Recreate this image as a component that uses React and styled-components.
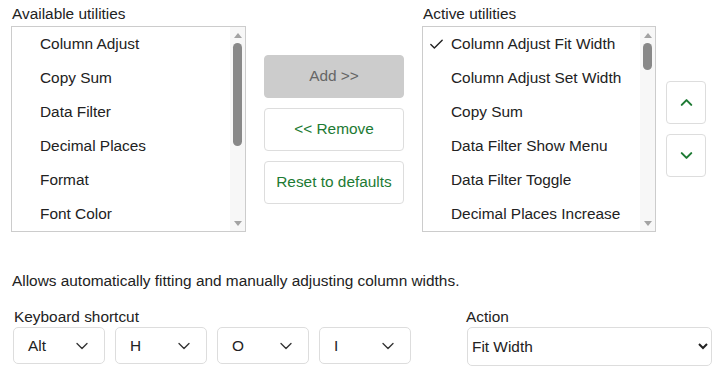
import React from 'react';
import styled, { createGlobalStyle } from 'styled-components';
import { Check, ChevronDown, ChevronUp } from 'lucide-react';

const GlobalStyle = createGlobalStyle`
  body {
    margin: 0;
    background: #fff;
    font-family: "Liberation Sans", Arial, sans-serif;
    color: #222;
  }
`;

const Page = styled.div`
  padding: 4px 11px 0;
  width: 726px;
  box-sizing: border-box;
`;

const Top = styled.div`
  display: grid;
  grid-template-columns: 235px 176px 234px 50px;
  grid-template-rows: 20px 206px;
  row-gap: 2px;
  align-items: center;
`;

const Label = styled.div`
  font-size: 15.4px;
  line-height: 20px;
  color: #222;
  margin-left: ${(p) => p.$indent ?? 1}px;
`;

const Spacer = styled.div``;

const ListBox = styled.div`
  height: 206px;
  border: 1px solid #ccc;
  box-sizing: border-box;
  display: flex;
  overflow: hidden;
  background: #fff;
`;

const Items = styled.ul`
  flex: 1;
  min-width: 0;
  list-style: none;
  margin: 0;
  padding: 0;
  overflow: hidden;
`;

const Item = styled.li`
  position: relative;
  height: 34px;
  line-height: 34px;
  padding-left: 28px;
  font-size: 15.4px;
  color: #222;
  white-space: nowrap;
`;

const Tick = styled.span`
  position: absolute;
  left: 5px;
  top: 9px;
  display: flex;
`;

const ScrollBar = styled.div`
  width: 15px;
  flex-shrink: 0;
  display: flex;
  flex-direction: column;
  background: #f7f7f7;
`;

const ScrollArrow = styled.div`
  height: 16px;
  display: flex;
  align-items: center;
  justify-content: center;
`;

const Track = styled.div`
  flex: 1;
  display: flex;
  justify-content: center;
`;

const Thumb = styled.div`
  width: 9px;
  height: ${(p) => p.$size}px;
  border-radius: 5px;
  background: #888;
`;

const ButtonCol = styled.div`
  display: flex;
  flex-direction: column;
  gap: 10px;
  justify-self: center;
`;

const ActionButton = styled.button`
  width: 140px;
  height: 43px;
  border-radius: 4px;
  font-family: inherit;
  font-size: 15.4px;
  border: 1px solid ${(p) => (p.$disabled ? '#ccc' : '#ddd')};
  background: ${(p) => (p.$disabled ? '#ccc' : '#fff')};
  color: ${(p) => (p.$disabled ? '#666' : '#1d7a33')};
  padding: 0;
`;

const ArrowCol = styled.div`
  display: flex;
  flex-direction: column;
  gap: 10px;
  justify-self: end;
`;

const IconButton = styled.button`
  width: 40px;
  height: 43px;
  border: 1px solid #ddd;
  border-radius: 4px;
  background: #fff;
  color: #1d7a33;
  display: flex;
  align-items: center;
  justify-content: center;
  padding: 0;
`;

const Description = styled.p`
  margin: 39px 0 0 1px;
  font-size: 15.4px;
  line-height: 20px;
  color: #222;
`;

const Bottom = styled.div`
  display: flex;
  justify-content: space-between;
  margin-top: 16px;
  padding-right: 3px;
`;

const Field = styled.div`
  display: flex;
  flex-direction: column;
`;

const KeyRow = styled.div`
  display: flex;
  gap: 10px;
  margin-left: 2px;
`;

const KeySelect = styled.div`
  width: 92px;
  height: 37px;
  box-sizing: border-box;
  border: 1px solid #ddd;
  border-radius: 5px;
  display: flex;
  align-items: center;
  justify-content: space-between;
  padding: 0 12px 0 14px;
  font-size: 15.4px;
  color: #222;
`;

const NativeSelect = styled.select`
  width: 245px;
  height: 39px;
  margin-left: 1px;
  border: 1px solid #ddd;
  border-radius: 5px;
  background: #fff;
  font-family: inherit;
  font-size: 15.4px;
  color: #222;
  padding: 0;
`;

const Scroll = ({ size }) => (
  <ScrollBar>
    <ScrollArrow>
      <svg width="8" height="5" viewBox="0 0 8 5"><path d="M0 5 L4 0 L8 5 Z" fill="#a3a3a3" /></svg>
    </ScrollArrow>
    <Track>
      <Thumb $size={size} />
    </Track>
    <ScrollArrow>
      <svg width="8" height="5" viewBox="0 0 8 5"><path d="M0 0 L4 5 L8 0 Z" fill="#a3a3a3" /></svg>
    </ScrollArrow>
  </ScrollBar>
);

const available = ['Column Adjust', 'Copy Sum', 'Data Filter', 'Decimal Places', 'Format', 'Font Color'];
const active = [
  'Column Adjust Fit Width',
  'Column Adjust Set Width',
  'Copy Sum',
  'Data Filter Show Menu',
  'Data Filter Toggle',
  'Decimal Places Increase',
];
const keys = ['Alt', 'H', 'O', 'I'];

export default function App() {
  return (
    <Page>
      <GlobalStyle />
      <Top>
        <Label>Available utilities</Label>
        <Spacer />
        <Label>Active utilities</Label>
        <Spacer />
        <ListBox>
          <Items>
            {available.map((name) => (
              <Item key={name}>{name}</Item>
            ))}
          </Items>
          <Scroll size={103} />
        </ListBox>
        <ButtonCol>
          <ActionButton $disabled>Add &gt;&gt;</ActionButton>
          <ActionButton>&lt;&lt; Remove</ActionButton>
          <ActionButton>Reset to defaults</ActionButton>
        </ButtonCol>
        <ListBox>
          <Items>
            {active.map((name, i) => (
              <Item key={name}>
                {i === 0 && (
                  <Tick>
                    <Check size={17} strokeWidth={2} color="#222" />
                  </Tick>
                )}
                {name}
              </Item>
            ))}
          </Items>
          <Scroll size={27} />
        </ListBox>
        <ArrowCol>
          <IconButton>
            <ChevronUp size={19} strokeWidth={2.6} />
          </IconButton>
          <IconButton>
            <ChevronDown size={19} strokeWidth={2.6} />
          </IconButton>
        </ArrowCol>
      </Top>
      <Description>Allows automatically fitting and manually adjusting column widths.</Description>
      <Bottom>
        <Field>
          <Label $indent={3}>Keyboard shortcut</Label>
          <KeyRow>
            {keys.map((k) => (
              <KeySelect key={k}>
                <span>{k}</span>
                <ChevronDown size={20} strokeWidth={1.6} color="#333" />
              </KeySelect>
            ))}
          </KeyRow>
        </Field>
        <Field>
          <Label $indent={0}>Action</Label>
          <NativeSelect defaultValue="fit">
            <option value="fit">Fit Width</option>
            <option value="set">Set Width</option>
          </NativeSelect>
        </Field>
      </Bottom>
    </Page>
  );
}
